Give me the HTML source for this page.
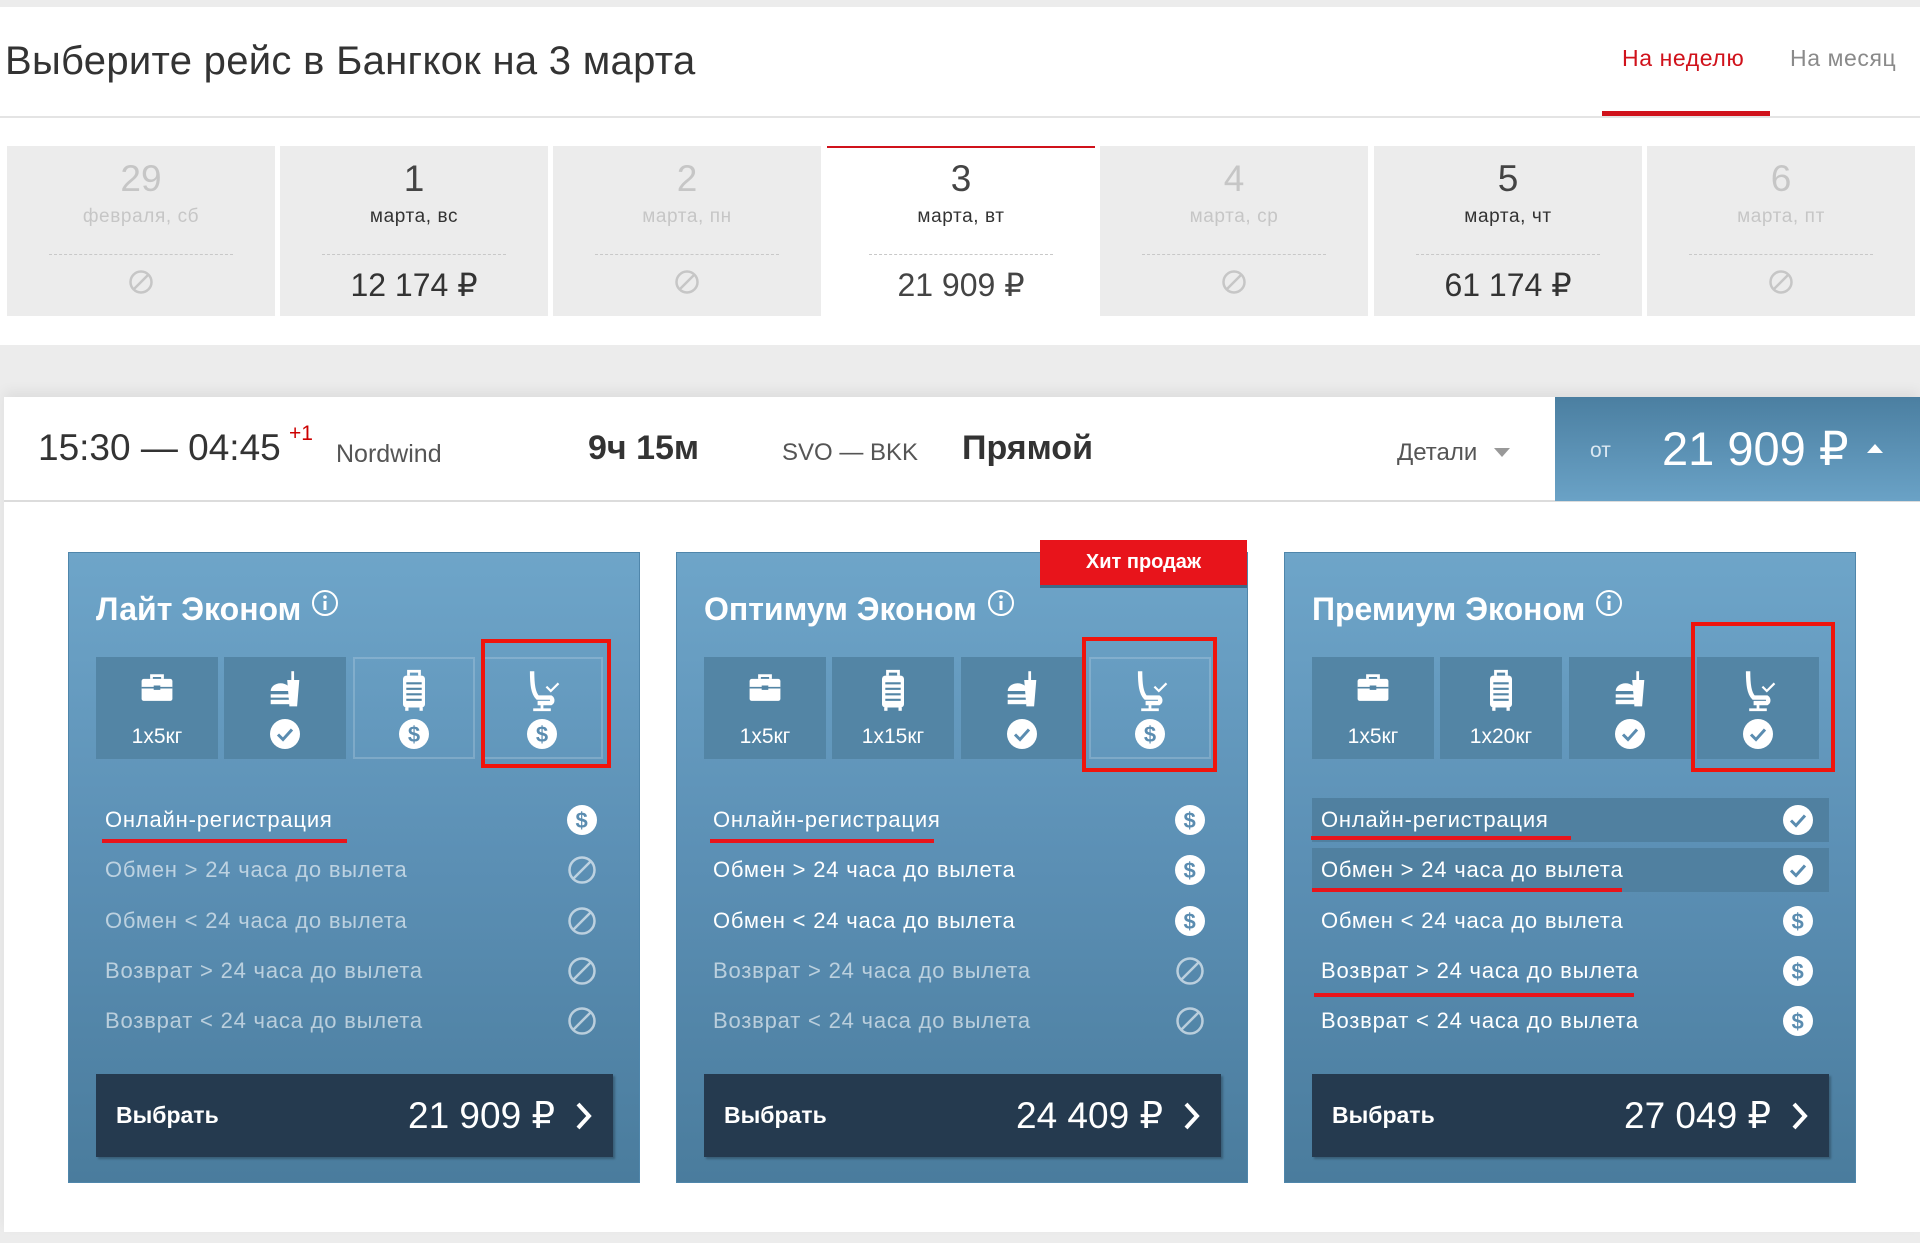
<!DOCTYPE html>
<html><head><meta charset="utf-8"><style>
*{margin:0;padding:0;box-sizing:border-box}
body{width:1920px;height:1243px;background:#ececec;font-family:"Liberation Sans",sans-serif;position:relative;overflow:hidden}
.a{position:absolute}
.date{position:absolute;top:146px;width:268px;height:170px;background:#ececec;text-align:center;color:#c6c6c6}
.date .n{position:absolute;top:12px;width:100%;font-size:37px}
.date .d{position:absolute;top:60px;width:100%;font-size:19px;letter-spacing:0.6px}
.date .l{position:absolute;top:108px;left:42px;right:42px;border-top:1px dashed #c8c8c8}
.date .p{position:absolute;top:120px;width:100%;font-size:32px;color:#333}
.date.on{color:#444}
.date.on .d{color:#333}
.card{position:absolute;top:552px;width:572px;height:631px;background:linear-gradient(#6ea5c9,#5b8fb4 50%,#4a7c9d);border:1px solid #4f86ab}
.card .t{position:absolute;left:27px;top:38px;font-size:32px;font-weight:bold;color:#fff}
.card .t svg{vertical-align:top;margin-left:10px;margin-top:-2px}
.tile{position:absolute;top:104px;width:122px;height:102px;background:#5385a5;color:#fff;text-align:center}
.tile.lt{background:transparent;border:2px solid rgba(255,255,255,.18)}
.tile .ic{position:absolute;left:41px;top:12px;width:40px;height:44px}
.tile .lb{position:absolute;top:68px;width:100%;font-size:21px}
.tile .cc{position:absolute;left:46px;top:62px}
.row{position:absolute;left:27px;width:517px;height:44px;color:#fff;font-size:22px;letter-spacing:0.8px;line-height:44px;padding-left:9px}
.row.dim{color:rgba(255,255,255,.6)}
.row.hl{background:#5080a0}
.row svg{position:absolute;right:16px;top:7px}
.ul{position:absolute;height:4px;background:#e8141b}
.btn{position:absolute;left:27px;top:521px;width:517px;height:83px;background:#253a4f;color:#fff;box-shadow:2px 2px 2px rgba(0,0,0,.25)}
.btn .s{position:absolute;left:20px;top:28px;font-size:23px;font-weight:bold}
.btn .pr{position:absolute;right:58px;top:20px;font-size:37px}
.btn svg{position:absolute;right:20px;top:27px}
.rb{position:absolute;border:4px solid #f0140c}
</style></head><body>
<svg width="0" height="0" style="position:absolute">
<defs>
<symbol id="ok" viewBox="0 0 30 30"><circle cx="15" cy="15" r="15" fill="#fff"/><path d="M8 15.5l5 5 9-10" fill="none" stroke="#5a8cb0" stroke-width="3"/></symbol>
<symbol id="usd" viewBox="0 0 30 30"><circle cx="15" cy="15" r="15" fill="#fff"/><text x="15" y="23" text-anchor="middle" font-family="Liberation Sans" font-weight="bold" font-size="22" fill="#5a8cb0">$</text></symbol>
<symbol id="no" viewBox="0 0 30 30"><circle cx="15" cy="15" r="12.5" fill="none" stroke="rgba(255,255,255,.6)" stroke-width="2.5"/><path d="M7 23L23 7" stroke="rgba(255,255,255,.6)" stroke-width="2.5"/></symbol>
<symbol id="bag" viewBox="0 0 36 40"><path d="M13 9V6h10v3" fill="none" stroke="#fff" stroke-width="2.5"/><rect x="4" y="9" width="28" height="20" rx="2" fill="#fff"/><path d="M4 17h28" stroke="#5385a5" stroke-width="1.5"/><rect x="15" y="15" width="6" height="4" fill="#5385a5"/></symbol>
<symbol id="food" viewBox="0 0 36 40"><path d="M25 2v8" stroke="#fff" stroke-width="2.5"/><path d="M20 10h11l-2 24h-7z" fill="#fff"/><path d="M5 20a9 7 0 0 1 18 0z" fill="#fff"/><rect x="5" y="23" width="17" height="3" fill="#fff"/><rect x="5" y="28" width="17" height="4" fill="#fff"/></symbol>
<symbol id="lug" viewBox="0 0 36 40"><path d="M13 6V2h10v4" fill="none" stroke="#fff" stroke-width="2.5"/><rect x="8" y="6" width="20" height="29" rx="3" fill="#fff"/><path d="M11 13h14M11 18h14M11 23h14M11 28h14" stroke="#5385a5" stroke-width="2"/><rect x="10" y="35" width="3" height="3" fill="#fff"/><rect x="23" y="35" width="3" height="3" fill="#fff"/></symbol>
<symbol id="seat" viewBox="0 0 36 40"><path d="M9 2c0 12 1 20 5 24h12a3 3 0 0 1 0 5H14" fill="none" stroke="#fff" stroke-width="4"/><path d="M18 31v5M10 37h16" stroke="#fff" stroke-width="2.5"/><path d="M22 16l4 4 7-7" fill="none" stroke="#fff" stroke-width="2"/></symbol>
</defs></svg>

<div class="a" style="left:0;top:7px;width:1920px;height:338px;background:#fff"></div>
<div class="a" style="left:5px;top:39px;font-size:40px;color:#333;letter-spacing:0.3px">Выберите рейс в Бангкок на 3 марта</div>
<div class="a" style="left:0;top:116px;width:1920px;height:2px;background:#e4e4e4"></div>
<div class="a" style="left:1622px;top:45px;font-size:23px;letter-spacing:0.6px;color:#d0121b">На неделю</div>
<div class="a" style="left:1790px;top:45px;font-size:23px;letter-spacing:0.6px;color:#8a8a8a">На месяц</div>
<div class="a" style="left:1602px;top:111px;width:168px;height:5px;background:#d0121b"></div>

<div class="date" style="left:7px"><div class="n">29</div><div class="d">февраля, сб</div><div class="l"></div><div class="p"><svg width="26" height="26" viewBox="0 0 26 26"><circle cx="13" cy="13" r="10.5" fill="none" stroke="#c6c6c6" stroke-width="2.5"/><path d="M6 20L20 6" stroke="#c6c6c6" stroke-width="2.5"/></svg></div></div>
<div class="date on" style="left:280px"><div class="n">1</div><div class="d">марта, вс</div><div class="l"></div><div class="p">12 174 ₽</div></div>
<div class="date" style="left:553px"><div class="n">2</div><div class="d">марта, пн</div><div class="l"></div><div class="p"><svg width="26" height="26" viewBox="0 0 26 26"><circle cx="13" cy="13" r="10.5" fill="none" stroke="#c6c6c6" stroke-width="2.5"/><path d="M6 20L20 6" stroke="#c6c6c6" stroke-width="2.5"/></svg></div></div>
<div class="date on" style="left:827px;background:#fff;border-top:2px solid #d0121b"><div class="n" style="top:10px">3</div><div class="d" style="top:58px">марта, вт</div><div class="l" style="top:106px"></div><div class="p" style="color:#444;top:118px">21 909 ₽</div></div>
<div class="date" style="left:1100px"><div class="n">4</div><div class="d">марта, ср</div><div class="l"></div><div class="p"><svg width="26" height="26" viewBox="0 0 26 26"><circle cx="13" cy="13" r="10.5" fill="none" stroke="#c6c6c6" stroke-width="2.5"/><path d="M6 20L20 6" stroke="#c6c6c6" stroke-width="2.5"/></svg></div></div>
<div class="date on" style="left:1374px"><div class="n">5</div><div class="d">марта, чт</div><div class="l"></div><div class="p">61 174 ₽</div></div>
<div class="date" style="left:1647px"><div class="n">6</div><div class="d">марта, пт</div><div class="l"></div><div class="p"><svg width="26" height="26" viewBox="0 0 26 26"><circle cx="13" cy="13" r="10.5" fill="none" stroke="#c6c6c6" stroke-width="2.5"/><path d="M6 20L20 6" stroke="#c6c6c6" stroke-width="2.5"/></svg></div></div>

<div class="a" style="left:4px;top:397px;width:1916px;height:835px;background:#fff;box-shadow:0 -6px 12px rgba(0,0,0,.06)"></div>
<div class="a" style="left:4px;top:500px;width:1916px;height:2px;background:#dcdcdc"></div>
<div class="a" style="left:38px;top:427px;font-size:37px;color:#333">15:30 — 04:45</div>
<div class="a" style="left:289px;top:422px;font-size:21px;color:#c00">+1</div>
<div class="a" style="left:336px;top:440px;font-size:25px;color:#555">Nordwind</div>
<div class="a" style="left:588px;top:429px;font-size:34px;font-weight:bold;color:#333">9ч 15м</div>
<div class="a" style="left:782px;top:439px;font-size:24px;color:#555">SVO — BKK</div>
<div class="a" style="left:962px;top:429px;font-size:34px;font-weight:bold;color:#333">Прямой</div>
<div class="a" style="left:1397px;top:439px;font-size:24px;color:#555">Детали</div>
<div class="a" style="left:1494px;top:448px;width:0;height:0;border-left:8px solid transparent;border-right:8px solid transparent;border-top:9px solid #999"></div>
<div class="a" style="left:1555px;top:397px;width:365px;height:104px;background:linear-gradient(#4b7fa1,#6aa2c6)"></div>
<div class="a" style="left:1590px;top:439px;font-size:21px;color:#dbe8f2">от</div>
<div class="a" style="left:1662px;top:421px;font-size:47px;color:#fff">21 909 ₽</div>
<div class="a" style="left:1867px;top:444px;width:0;height:0;border-left:8px solid transparent;border-right:8px solid transparent;border-bottom:9px solid #fff"></div>

<!-- card 1 -->
<div class="card" style="left:68px">
<div class="t">Лайт Эконом<svg width="28" height="28" viewBox="0 0 28 28"><circle cx="14" cy="14" r="12" fill="none" stroke="#fff" stroke-width="2"/><path d="M14 12v9" stroke="#fff" stroke-width="3"/><circle cx="14" cy="8" r="1.8" fill="#fff"/></svg></div>
<div class="tile" style="left:27px"><svg class="ic"><use href="#bag"/></svg><div class="lb">1x5кг</div></div>
<div class="tile" style="left:155px"><svg class="ic"><use href="#food"/></svg><svg class="cc" width="30" height="30"><use href="#ok"/></svg></div>
<div class="tile lt" style="left:284px"><svg class="ic" style="left:39px;top:10px"><use href="#lug"/></svg><svg class="cc" style="left:44px;top:60px" width="30" height="30"><use href="#usd"/></svg></div>
<div class="tile lt" style="left:412px"><svg class="ic" style="left:39px;top:10px"><use href="#seat"/></svg><svg class="cc" style="left:44px;top:60px" width="30" height="30"><use href="#usd"/></svg></div>
<div class="row" style="top:245px">Онлайн-регистрация<svg width="30" height="30"><use href="#usd"/></svg></div>
<div class="row dim" style="top:295px">Обмен &gt; 24 часа до вылета<svg width="30" height="30"><use href="#no"/></svg></div>
<div class="row dim" style="top:346px">Обмен &lt; 24 часа до вылета<svg width="30" height="30"><use href="#no"/></svg></div>
<div class="row dim" style="top:396px">Возврат &gt; 24 часа до вылета<svg width="30" height="30"><use href="#no"/></svg></div>
<div class="row dim" style="top:446px">Возврат &lt; 24 часа до вылета<svg width="30" height="30"><use href="#no"/></svg></div>
<div class="ul" style="left:33px;top:286px;width:245px"></div>
<div class="btn"><div class="s">Выбрать</div><div class="pr">21 909 ₽</div><svg width="18" height="30" viewBox="0 0 18 30"><path d="M3 3l11 12L3 27" fill="none" stroke="#fff" stroke-width="4"/></svg></div>
</div>

<!-- card 2 -->
<div class="card" style="left:676px">
<div class="t">Оптимум Эконом<svg width="28" height="28" viewBox="0 0 28 28"><circle cx="14" cy="14" r="12" fill="none" stroke="#fff" stroke-width="2"/><path d="M14 12v9" stroke="#fff" stroke-width="3"/><circle cx="14" cy="8" r="1.8" fill="#fff"/></svg></div>
<div class="tile" style="left:27px"><svg class="ic"><use href="#bag"/></svg><div class="lb">1x5кг</div></div>
<div class="tile" style="left:155px"><svg class="ic"><use href="#lug"/></svg><div class="lb">1x15кг</div></div>
<div class="tile" style="left:284px"><svg class="ic"><use href="#food"/></svg><svg class="cc" width="30" height="30"><use href="#ok"/></svg></div>
<div class="tile lt" style="left:412px"><svg class="ic" style="left:39px;top:10px"><use href="#seat"/></svg><svg class="cc" style="left:44px;top:60px" width="30" height="30"><use href="#usd"/></svg></div>
<div class="row" style="top:245px">Онлайн-регистрация<svg width="30" height="30"><use href="#usd"/></svg></div>
<div class="row" style="top:295px">Обмен &gt; 24 часа до вылета<svg width="30" height="30"><use href="#usd"/></svg></div>
<div class="row" style="top:346px">Обмен &lt; 24 часа до вылета<svg width="30" height="30"><use href="#usd"/></svg></div>
<div class="row dim" style="top:396px">Возврат &gt; 24 часа до вылета<svg width="30" height="30"><use href="#no"/></svg></div>
<div class="row dim" style="top:446px">Возврат &lt; 24 часа до вылета<svg width="30" height="30"><use href="#no"/></svg></div>
<div class="ul" style="left:33px;top:286px;width:224px"></div>
<div class="btn"><div class="s">Выбрать</div><div class="pr">24 409 ₽</div><svg width="18" height="30" viewBox="0 0 18 30"><path d="M3 3l11 12L3 27" fill="none" stroke="#fff" stroke-width="4"/></svg></div>
</div>
<div class="a" style="left:1040px;top:540px;width:207px;height:45px;background:#e8141b;color:#fff;font-size:20px;font-weight:bold;text-align:center;line-height:45px;box-shadow:0 3px 0 #3d6a88">Хит продаж</div>

<!-- card 3 -->
<div class="card" style="left:1284px">
<div class="t">Премиум Эконом<svg width="28" height="28" viewBox="0 0 28 28"><circle cx="14" cy="14" r="12" fill="none" stroke="#fff" stroke-width="2"/><path d="M14 12v9" stroke="#fff" stroke-width="3"/><circle cx="14" cy="8" r="1.8" fill="#fff"/></svg></div>
<div class="tile" style="left:27px"><svg class="ic"><use href="#bag"/></svg><div class="lb">1x5кг</div></div>
<div class="tile" style="left:155px"><svg class="ic"><use href="#lug"/></svg><div class="lb">1x20кг</div></div>
<div class="tile" style="left:284px"><svg class="ic"><use href="#food"/></svg><svg class="cc" width="30" height="30"><use href="#ok"/></svg></div>
<div class="tile" style="left:412px"><svg class="ic"><use href="#seat"/></svg><svg class="cc" width="30" height="30"><use href="#ok"/></svg></div>
<div class="row hl" style="top:245px">Онлайн-регистрация<svg width="30" height="30"><use href="#ok"/></svg></div>
<div class="row hl" style="top:295px">Обмен &gt; 24 часа до вылета<svg width="30" height="30"><use href="#ok"/></svg></div>
<div class="row" style="top:346px">Обмен &lt; 24 часа до вылета<svg width="30" height="30"><use href="#usd"/></svg></div>
<div class="row" style="top:396px">Возврат &gt; 24 часа до вылета<svg width="30" height="30"><use href="#usd"/></svg></div>
<div class="row" style="top:446px">Возврат &lt; 24 часа до вылета<svg width="30" height="30"><use href="#usd"/></svg></div>
<div class="ul" style="left:26px;top:283px;width:260px"></div>
<div class="ul" style="left:27px;top:335px;width:310px"></div>
<div class="ul" style="left:29px;top:440px;width:320px"></div>
<div class="btn"><div class="s">Выбрать</div><div class="pr">27 049 ₽</div><svg width="18" height="30" viewBox="0 0 18 30"><path d="M3 3l11 12L3 27" fill="none" stroke="#fff" stroke-width="4"/></svg></div>
</div>

<div class="rb" style="left:481px;top:639px;width:130px;height:129px"></div>
<div class="rb" style="left:1082px;top:637px;width:135px;height:135px"></div>
<div class="rb" style="left:1691px;top:622px;width:144px;height:150px"></div>
</body></html>
